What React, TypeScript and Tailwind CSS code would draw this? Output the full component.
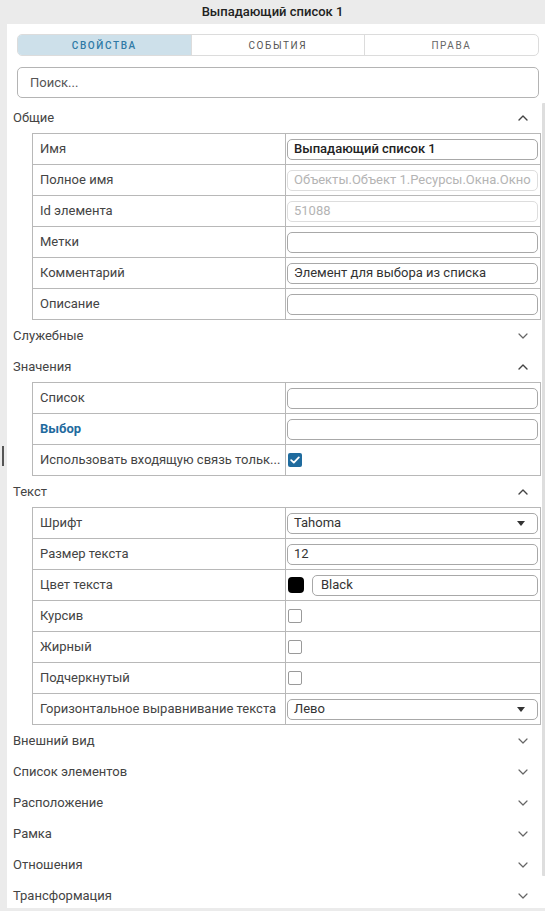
import React from "react";

const font = { fontFamily: "Roboto, 'Noto Sans', sans-serif" };

function ChevronUp() {
  return (
    <svg width="10" height="6" viewBox="0 0 10 6" fill="none">
      <polyline points="1,5 5,1 9,5" stroke="#444" strokeWidth="1.4" strokeLinecap="round" strokeLinejoin="round" />
    </svg>
  );
}

function ChevronDown() {
  return (
    <svg width="10" height="6" viewBox="0 0 10 6" fill="none">
      <polyline points="1,1 5,5 9,1" stroke="#666" strokeWidth="1.2" strokeLinecap="round" strokeLinejoin="round" />
    </svg>
  );
}

function Caret() {
  return (
    <svg width="8" height="5" viewBox="0 0 8 5">
      <polygon points="0,0 8,0 4,5" fill="#333" />
    </svg>
  );
}

type Cell =
  | { kind: "input"; value?: string; bold?: boolean; disabled?: boolean }
  | { kind: "select"; value: string }
  | { kind: "check"; checked?: boolean }
  | { kind: "color"; value: string };

type Row = { label: string; strong?: boolean; cell: Cell };

function Section({ title, open, rows }: { title: string; open?: boolean; rows?: Row[] }) {
  return (
    <div>
      <div className="h-[31px] flex items-center justify-between pl-[6px] pr-[13px]">
        <span className="text-[13px] text-[#444]">{title}</span>
        {open ? <ChevronUp /> : <ChevronDown />}
      </div>
      {open && rows && (
        <div className="ml-[25px] border border-[#b8b8b8]">
          {rows.map((r, i) => (
            <div
              key={r.label}
              className={`flex ${i > 0 ? "h-[31px] border-t border-[#b8b8b8]" : "h-[30px]"}`}
            >
              <div className="w-[252px] shrink-0 flex items-center pl-[7px] pr-1 overflow-hidden">
                <span
                  className={`text-[13px] whitespace-nowrap ${
                    r.strong ? "font-bold text-[#1f6b9e]" : "text-[#444]"
                  }`}
                >
                  {r.label}
                </span>
              </div>
              <div className="flex-1 border-l border-[#b8b8b8] flex items-center pl-[1px] pr-[2px]">
                <CellView cell={r.cell} />
              </div>
            </div>
          ))}
        </div>
      )}
    </div>
  );
}

function CellView({ cell }: { cell: Cell }) {
  if (cell.kind === "input") {
    return (
      <div
        className={`h-[21px] w-full rounded-[5px] border flex items-center px-[6px] ${
          cell.disabled ? "border-[#dddddd]" : "border-[#a8a8a8]"
        }`}
      >
        <span
          className={`text-[13px] whitespace-nowrap overflow-hidden ${
            cell.disabled ? "text-[#b4b4b4]" : cell.bold ? "font-medium text-[#222]" : "text-[#333]"
          }`}
        >
          {cell.value ?? ""}
        </span>
      </div>
    );
  }
  if (cell.kind === "select") {
    return (
      <div className="h-[21px] w-full rounded-[5px] border border-[#a8a8a8] flex items-center justify-between pl-[6px] pr-[12px]">
        <span className="text-[13px] text-[#333]">{cell.value}</span>
        <Caret />
      </div>
    );
  }
  if (cell.kind === "check") {
    return cell.checked ? (
      <div className="ml-[1px] w-[14px] h-[14px] rounded-[2px] bg-[#1f6b9e] flex items-center justify-center">
        <svg width="10" height="8" viewBox="0 0 10 8" fill="none">
          <polyline points="1.2,4.2 3.8,6.6 8.8,1.4" stroke="#fff" strokeWidth="1.8" strokeLinecap="round" strokeLinejoin="round" />
        </svg>
      </div>
    ) : (
      <div className="ml-[1px] w-[14px] h-[14px] rounded-[2px] border border-[#9a9a9a] bg-white" />
    );
  }
  return (
    <div className="w-full flex items-center gap-[8px]">
      <div className="w-[16px] h-[16px] rounded-[4px] bg-black shrink-0 ml-[1px]" />
      <div className="h-[21px] flex-1 rounded-[5px] border border-[#a8a8a8] flex items-center px-[8px]">
        <span className="text-[13px] text-[#333]">{cell.value}</span>
      </div>
    </div>
  );
}

const general: Row[] = [
  { label: "Имя", cell: { kind: "input", value: "Выпадающий список 1", bold: true } },
  { label: "Полное имя", cell: { kind: "input", value: "Объекты.Объект 1.Ресурсы.Окна.Окно", disabled: true } },
  { label: "Id элемента", cell: { kind: "input", value: "51088", disabled: true } },
  { label: "Метки", cell: { kind: "input" } },
  { label: "Комментарий", cell: { kind: "input", value: "Элемент для выбора из списка" } },
  { label: "Описание", cell: { kind: "input" } },
];

const values: Row[] = [
  { label: "Список", cell: { kind: "input" } },
  { label: "Выбор", strong: true, cell: { kind: "input" } },
  { label: "Использовать входящую связь тольк...", cell: { kind: "check", checked: true } },
];

const text: Row[] = [
  { label: "Шрифт", cell: { kind: "select", value: "Tahoma" } },
  { label: "Размер текста", cell: { kind: "input", value: "12" } },
  { label: "Цвет текста", cell: { kind: "color", value: "Black" } },
  { label: "Курсив", cell: { kind: "check" } },
  { label: "Жирный", cell: { kind: "check" } },
  { label: "Подчеркнутый", cell: { kind: "check" } },
  { label: "Горизонтальное выравнивание текста", cell: { kind: "select", value: "Лево" } },
];

export default function App() {
  return (
    <div className="w-[545px] h-[911px] bg-[#ebebeb] flex flex-col overflow-hidden" style={font}>
      <div className="h-[24px] shrink-0 flex items-center justify-center">
        <span className="text-[13px] font-medium text-[#222]">Выпадающий список 1</span>
      </div>
      <div className="flex-1 flex min-h-0">
        <div className="w-[7px] shrink-0 flex flex-col">
          <div className="mt-[422px] ml-[2px] w-[2px] h-[20px] bg-[#555]" />
        </div>
        <div className="flex-1 bg-white flex flex-col min-h-0 mb-[3px]">
          <div className="mt-[10px] ml-[10px] mr-[7px] h-[22px] flex rounded-[5px] border border-[#dcdcdc] overflow-hidden">
            <div className="flex-1 bg-[#cde0ea] flex items-center justify-center">
              <span className="text-[10px] font-medium tracking-[1.6px] text-[#2f7aa6]">СВОЙСТВА</span>
            </div>
            <div className="flex-1 border-l border-[#dcdcdc] flex items-center justify-center">
              <span className="text-[10px] tracking-[1.6px] text-[#555]">СОБЫТИЯ</span>
            </div>
            <div className="flex-1 border-l border-[#dcdcdc] flex items-center justify-center">
              <span className="text-[10px] tracking-[1.6px] text-[#666]">ПРАВА</span>
            </div>
          </div>
          <div className="mt-[11px] ml-[10px] mr-[7px] h-[31px] rounded-[5px] border border-[#b4b4b4] flex items-center px-[12px]">
            <span className="text-[13px] text-[#555]">Поиск...</span>
          </div>
          <div className="mt-[4px] flex-1 flex min-h-0">
            <div className="flex-1 overflow-hidden">
              <Section title="Общие" open rows={general} />
              <Section title="Служебные" />
              <Section title="Значения" open rows={values} />
              <Section title="Текст" open rows={text} />
              <Section title="Внешний вид" />
              <Section title="Список элементов" />
              <Section title="Расположение" />
              <Section title="Рамка" />
              <Section title="Отношения" />
              <Section title="Трансформация" />
            </div>
            <div className="w-[5px] shrink-0 pt-[1px] pl-[1px]">
              <div className="w-[4px] h-[773px] bg-[#dedede] rounded-l-[1px]" />
            </div>
          </div>
        </div>
      </div>
    </div>
  );
}
